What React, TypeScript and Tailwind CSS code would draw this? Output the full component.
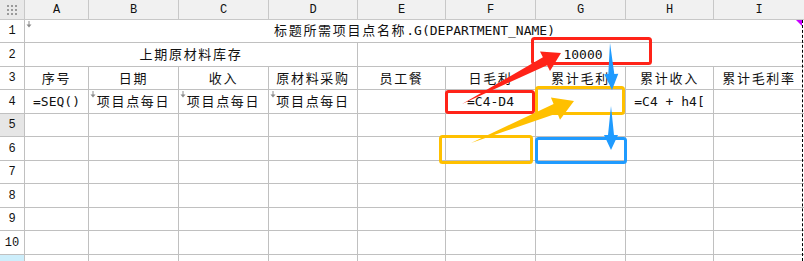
import React from "react";

const COLS = ["A", "B", "C", "D", "E", "F", "G", "H", "I"];
const ROW_H = ["h-[23px]", "h-[24px]", "h-[23px]", "h-[24px]", "h-[23px]", "h-[24px]", "h-[23px]", "h-[24px]", "h-[23px]", "h-[24px]", "h-[20px]"];

const cell = "border-r border-b border-[#c0c0c0] flex items-center justify-center relative";
const cjk = "tracking-[1.7px]";

// small gray "expand down" marker in the top-left of a cell
function Marker() {
  return (
    <svg className="absolute left-[1px] top-[1px]" width="6" height="7" viewBox="0 0 6 7">
      <path d="M3 0 V5" stroke="#8a8a8a" strokeWidth="1" />
      <path d="M0.5 3.5 L3 6.5 L5.5 3.5 Z" fill="#8a8a8a" />
    </svg>
  );
}

// tapered arrow: thin tail widening toward a head
function arrow(tx: number, ty: number, px: number, py: number, w: number, hw: number, h: number) {
  const len = Math.hypot(px - tx, py - ty);
  const ux = (px - tx) / len;
  const uy = (py - ty) / len;
  const nx = -uy;
  const ny = ux;
  const bx = px - ux * h;
  const by = py - uy * h;
  const pts = [
    [tx, ty],
    [bx + (nx * w) / 2, by + (ny * w) / 2],
    [bx + nx * hw, by + ny * hw],
    [px, py],
    [bx - nx * hw, by - ny * hw],
    [bx - (nx * w) / 2, by - (ny * w) / 2],
  ];
  return pts.map((p) => p.map((v) => v.toFixed(1)).join(",")).join(" ");
}

const row3 = ["序号", "日期", "收入", "原材料采购", "员工餐", "日毛利", "累计毛利", "累计收入", "累计毛利率"];

export default function App() {
  return (
    <div className="relative w-[804px] h-[261px] overflow-hidden bg-white text-[13px] text-[#111] font-['DejaVu_Sans_Mono','Noto_Sans_CJK_SC',monospace]">
      <div className="grid grid-cols-[25px_64px_90px_90px_89px_88px_90px_90px_88px_91px]">
        {/* column header row */}
        <div className="h-[20px] border-r border-b border-[#c8c8c8] bg-[#e9e9e9] flex items-center justify-center">
          <div className="grid grid-cols-3 gap-[2px]">
            {Array.from({ length: 9 }).map((_, i) => (
              <div key={i} className="w-[2px] h-[2px] bg-[#9a9a9a]" />
            ))}
          </div>
        </div>
        {COLS.map((c) => (
          <div
            key={c}
            className="h-[20px] border-r border-b border-[#c8c8c8] bg-[#f1f1f1] flex items-center justify-center text-[12px] font-['Liberation_Mono',monospace]"
          >
            {c}
          </div>
        ))}

        {/* row 1 */}
        <div className={`${cell} ${ROW_H[0]} text-[12px] font-['Liberation_Mono',monospace]`}>1</div>
        <div className={`${cell} ${ROW_H[0]} col-span-9`}>
          <Marker />
          <span className={cjk}>标题所需项目点名称</span>
          <span>.G(DEPARTMENT_NAME)</span>
          <div className="absolute right-[2px] top-0 w-0 h-0 border-t-[6px] border-t-[#c800ff] border-l-[6px] border-l-transparent" />
        </div>

        {/* row 2 */}
        <div className={`${cell} ${ROW_H[1]} text-[12px] font-['Liberation_Mono',monospace]`}>2</div>
        <div className={`${cell} ${ROW_H[1]} col-span-4`}>
          <span className={cjk}>上期原材料库存</span>
        </div>
        <div className={`${cell} ${ROW_H[1]} col-span-5`}>
          <span className="pl-[4px]">10000</span>
        </div>

        {/* row 3 */}
        <div className={`${cell} ${ROW_H[2]} text-[12px] font-['Liberation_Mono',monospace]`}>3</div>
        {row3.map((t) => (
          <div key={t} className={`${cell} ${ROW_H[2]} pt-[2px]`}>
            <span className={cjk}>{t}</span>
          </div>
        ))}

        {/* row 4 */}
        <div className={`${cell} ${ROW_H[3]} text-[12px] font-['Liberation_Mono',monospace]`}>4</div>
        <div className={`${cell} ${ROW_H[3]}`}>=SEQ()</div>
        <div className={`${cell} ${ROW_H[3]}`}>
          <Marker />
          <span className={cjk}>项目点每日</span>
        </div>
        <div className={`${cell} ${ROW_H[3]}`}>
          <Marker />
          <span className={cjk}>项目点每日</span>
        </div>
        <div className={`${cell} ${ROW_H[3]}`}>
          <Marker />
          <span className={cjk}>项目点每日</span>
        </div>
        <div className={`${cell} ${ROW_H[3]}`} />
        <div className={`${cell} ${ROW_H[3]}`}>=C4-D4</div>
        <div className={`${cell} ${ROW_H[3]}`} />
        <div className={`${cell} ${ROW_H[3]}`}>=C4 + h4[</div>
        <div className={`${cell} ${ROW_H[3]}`} />

        {/* empty rows 5-11 */}
        {[5, 6, 7, 8, 9, 10, 11].map((n) => (
          <React.Fragment key={n}>
            <div
              className={`${cell} ${ROW_H[n - 1]} text-[12px] font-['Liberation_Mono',monospace] ${
                n === 5 ? "bg-[#e6e6e6]" : n === 11 ? "bg-[#cdeefb]" : ""
              }`}
            >
              {n === 11 ? "" : n}
            </div>
            {COLS.map((c) => (
              <div key={c} className={`${cell} ${ROW_H[n - 1]}`} />
            ))}
          </React.Fragment>
        ))}
      </div>

      {/* page break line */}
      <div className="absolute left-[802px] top-[20px] bottom-0 border-l border-dashed border-black" />

      {/* annotations */}
      <svg className="absolute inset-0 pointer-events-none" width="804" height="261" viewBox="0 0 804 261">
        <rect x="532.5" y="38.5" width="118" height="25" rx="2" fill="none" stroke="#ff2318" strokeWidth="3" />
        <rect x="446.5" y="91.5" width="87" height="21" rx="2" fill="none" stroke="#ff2318" strokeWidth="3" />
        <rect x="536.5" y="87.5" width="87" height="26" rx="2" fill="none" stroke="#ffc000" strokeWidth="3" />
        <rect x="440.5" y="136.5" width="91" height="26" rx="2" fill="none" stroke="#ffc000" strokeWidth="3" />
        <rect x="536.5" y="138.5" width="89" height="24" rx="2" fill="none" stroke="#1f9bff" strokeWidth="3" />

        <polygon points={arrow(462, 104, 561, 53, 9, 11, 18)} fill="#ff2318" />
        <polygon points={arrow(471, 143, 574, 101, 10, 12, 20)} fill="#ffc000" />
        <polygon points={arrow(610, 43, 612, 90, 6, 7, 16)} fill="#1f9bff" />
        <polygon points={arrow(611, 106, 611, 150, 6, 7, 15)} fill="#1f9bff" />
      </svg>
    </div>
  );
}
